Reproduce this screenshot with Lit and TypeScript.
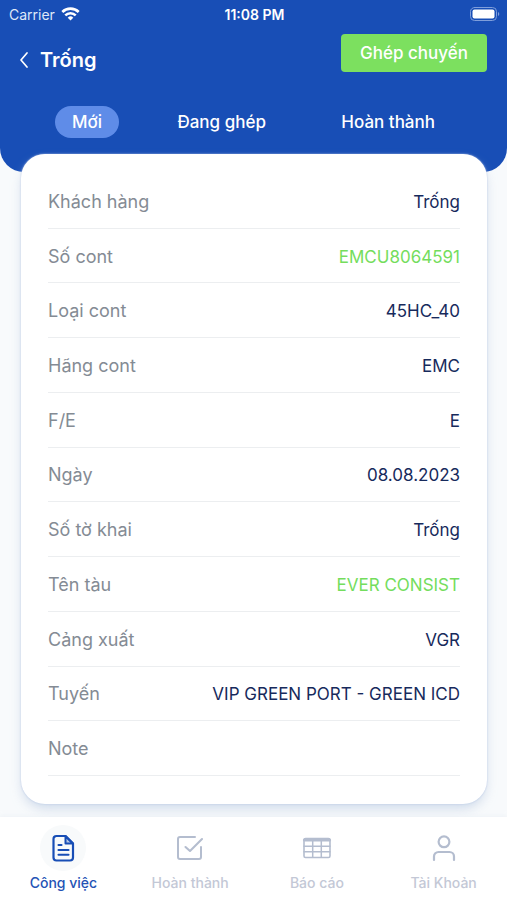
import { LitElement, html, css, svg } from "lit";
import { customElement, state } from "lit/decorators.js";
import { classMap } from "lit/directives/class-map.js";

interface Row {
  label: string;
  value: string;
  accent?: boolean;
}

const ROWS: Row[] = [
  { label: "Khách hàng", value: "Trống" },
  { label: "Số cont", value: "EMCU8064591", accent: true },
  { label: "Loại cont", value: "45HC_40" },
  { label: "Hãng cont", value: "EMC" },
  { label: "F/E", value: "E" },
  { label: "Ngày", value: "08.08.2023" },
  { label: "Số tờ khai", value: "Trống" },
  { label: "Tên tàu", value: "EVER CONSIST", accent: true },
  { label: "Cảng xuất", value: "VGR" },
  { label: "Tuyến", value: "VIP GREEN PORT - GREEN ICD" },
  { label: "Note", value: "" },
];

const TABS = ["Mới", "Đang ghép", "Hoàn thành"];

const NAV = [
  {
    label: "Công việc",
    icon: svg`<path d="M9.500 4h9l7.500 7.500v14a3 3 0 0 1-3 3H9.500a3 3 0 0 1-3-3V7a3 3 0 0 1 3-3z" stroke-width="2.200"/>
      <path d="M18.500 4v7.500H26z" fill="currentColor" fill-opacity=".3" stroke-width="2"/>
      <path d="M11.500 13h3M11.500 18h10M11.500 22.800h10" stroke-width="2.100"/>`,
  },
  {
    label: "Hoàn thành",
    icon: svg`<path d="M21 5H6a2 2 0 0 0-2 2v18a2 2 0 0 0 2 2h19a2 2 0 0 0 2-2V15" stroke-width="2"/>
      <path d="M11.500 15l4.500 4L28 7" stroke-width="2.100"/>`,
  },
  {
    label: "Báo cáo",
    icon: svg`<rect x="3" y="6.500" width="26" height="19" rx="1.500" stroke-width="1.600"/>
      <path d="M3.500 8h25" stroke-width="3.200"/>
      <path d="M3 14.200h26M3 19.800h26M11.700 9v16M20.300 9v16" stroke-width="1.500"/>`,
  },
  {
    label: "Tài Khoản",
    icon: svg`<circle cx="16" cy="9.800" r="5.400" stroke-width="2.200"/>
      <path d="M6 28v-3.500a4.500 4.500 0 0 1 4.500-4.500h11a4.500 4.500 0 0 1 4.500 4.500V28" stroke-width="2.200"/>`,
  },
];

@customElement("app-root")
export class AppRoot extends LitElement {
  @state() private tab = 0;
  @state() private page = 0;

  static styles = css`
    :host {
      display: flex;
      flex-direction: column;
      min-height: 100vh;
      background: #f8fafc;
      font-family: Inter, "Liberation Sans", sans-serif;
      color: #172a5c;
    }
    * {
      box-sizing: border-box;
    }
    button {
      border: 0;
      background: none;
      padding: 0;
      font: inherit;
      color: inherit;
      cursor: pointer;
    }
    svg {
      display: block;
      fill: none;
      stroke: currentColor;
      stroke-linecap: round;
      stroke-linejoin: round;
    }
    header {
      background: #184eb6;
      color: #fff;
      border-radius: 0 0 24px 24px;
      padding-bottom: 34px;
    }
    .status {
      display: grid;
      grid-template-columns: 1fr auto 1fr;
      align-items: center;
      height: 28px;
      padding: 0 7px 0 9px;
      font-size: 14px;
    }
    .carrier {
      display: flex;
      align-items: center;
      gap: 6px;
      color: #dfe8f8;
    }
    .time {
      font-weight: 600;
    }
    .battery {
      justify-self: end;
    }
    .title-bar {
      display: flex;
      align-items: center;
      justify-content: space-between;
      height: 50px;
      padding: 0 20px 0 18px;
    }
    .title {
      display: flex;
      align-items: center;
      gap: 10px;
      padding-top: 14px;
    }
    h1 {
      margin: 0;
      font-size: 20px;
      line-height: 24px;
      font-weight: 600;
    }
    .merge {
      height: 38px;
      padding: 0 19px;
      border-radius: 4px;
      background: #7ce05f;
      font-size: 17px;
      font-weight: 500;
    }
    .tabs {
      display: flex;
      justify-content: space-between;
      padding: 28px 55px 0;
    }
    .tab {
      height: 32px;
      padding: 0 17px;
      border-radius: 16px;
      font-size: 17px;
      font-weight: 500;
    }
    .tab.on {
      background: #5f8ce8;
    }
    main {
      flex: 1;
      display: flex;
      padding: 0 20px 13px 21px;
      margin-top: -18px;
    }
    .card {
      flex: 1;
      display: grid;
      grid-auto-rows: 1fr;
      margin: 0;
      padding: 20px 27px 28px;
      border-radius: 24px;
      background: #fff;
      box-shadow: 0 6px 12px -2px #b4c6dea6, 0 0 2px #b9c8e8;
    }
    .row {
      display: flex;
      align-items: center;
      justify-content: space-between;
      gap: 16px;
      min-height: 48px;
      padding-top: 2px;
      border-bottom: 1px solid #eceef0;
      line-height: 24px;
    }
    dt {
      font-size: 18px;
      color: #848b94;
    }
    dd {
      margin: 0;
      font-size: 17px;
      text-align: right;
    }
    dd.accent {
      color: #74dd5d;
    }
    nav {
      display: grid;
      grid-template-columns: repeat(4, 1fr);
      height: 83px;
      background: #fff;
      box-shadow: 0 -1px 4px #e6ebf180;
    }
    .item {
      display: flex;
      flex-direction: column;
      align-items: center;
      padding-top: 8px;
      gap: 2px;
      font-size: 14px;
      line-height: 20px;
      font-weight: 500;
      color: #c3c8d6;
    }
    .item.on {
      color: #2453b5;
    }
    .disc {
      display: grid;
      place-items: center;
      width: 46px;
      height: 46px;
      border-radius: 50%;
      color: #b4bdcf;
    }
    .on .disc {
      background: #f8fafb;
      color: #184eb6;
    }
  `;

  render() {
    return html`
      <header>
        <div class="status">
          <span class="carrier">
            Carrier
            <svg width="19" height="14" viewBox="0 0 19 14" stroke="none" aria-hidden="true">
              <g stroke="#fff" stroke-width="2.600" stroke-linecap="butt">
                <path d="M1.300 5a11.600 11.600 0 0 1 16.400 0" />
                <path d="M4.300 8.400a7.400 7.400 0 0 1 10.400 0" />
              </g>
              <path d="M9.500 13.600L6.700 10.700a4 4 0 0 1 5.600 0z" fill="#fff" stroke="none" />
            </svg>
          </span>
          <span class="time">11:08 PM</span>
          <svg class="battery" width="30" height="14" viewBox="0 0 30 14" aria-hidden="true">
            <rect x="0.500" y="0.500" width="26" height="13" rx="4" stroke="#7f9edb" />
            <rect x="2.500" y="2.500" width="22" height="9" rx="2" fill="#fff" stroke="none" />
            <path d="M28 5v4a2.200 2.200 0 0 0 0-4z" fill="#7f9edb" stroke="none" />
          </svg>
        </div>
        <div class="title-bar">
          <div class="title">
            <button aria-label="Quay lại">
              <svg width="12" height="20" viewBox="0 0 12 20" stroke-width="1.700">
                <path d="M9 3L3 10l6 7" />
              </svg>
            </button>
            <h1>Trống</h1>
          </div>
          <button class="merge">Ghép chuyến</button>
        </div>
        <div class="tabs">
          ${TABS.map(
            (t, i) => html`<button
              class=${classMap({ tab: true, on: i === this.tab })}
              aria-pressed=${i === this.tab}
              @click=${() => (this.tab = i)}
            >${t}</button>`
          )}
        </div>
      </header>
      <main>
        <dl class="card">
          ${ROWS.map(
            (r) => html`<div class="row">
              <dt>${r.label}</dt>
              <dd class=${classMap({ accent: !!r.accent })}>${r.value}</dd>
            </div>`
          )}
        </dl>
      </main>
      <nav>
        ${NAV.map(
          (n, i) => html`<button
            class=${classMap({ item: true, on: i === this.page })}
            @click=${() => (this.page = i)}
          >
            <span class="disc">
              <svg width="32" height="32" viewBox="0 0 32 32" aria-hidden="true">${n.icon}</svg>
            </span>
            ${n.label}
          </button>`
        )}
      </nav>
    `;
  }
}
